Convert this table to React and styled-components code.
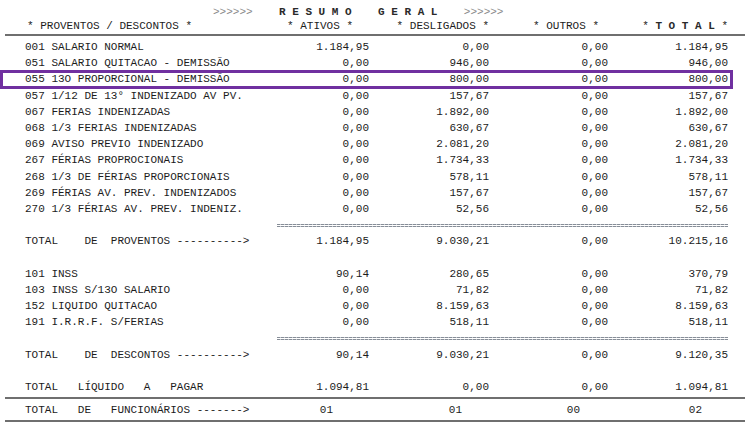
import React from 'react'
import styled, { createGlobalStyle } from 'styled-components'

const GlobalStyle = createGlobalStyle`
  html, body {
    margin: 0;
    padding: 0;
    background: #ffffff;
  }
  body {
    font-family: "Liberation Mono", "Courier New", monospace;
    font-size: 11px;
    color: #1c1c1c;
  }
`

const Sheet = styled.div`
  width: 740px;
  margin-left: 5px;
  padding-top: 5px;
`

const Title = styled.div`
  padding-left: 208px;
  line-height: 14px;
  white-space: pre;
`

const Arrows = styled.span`
  color: #8a8a8a;
`

const Spaced = styled.span`
  font-weight: bold;
  color: #2a2a2a;
`

const Rule = styled.div`
  height: 2px;
  background: #6f6f6f;
  margin-top: ${p => p.$top || 0}px;
  margin-bottom: ${p => p.$bottom || 0}px;
`

const Grid = styled.div`
  display: grid;
  grid-template-columns: 224px 120px 120px 119px 120px;
  padding-left: 20px;
  height: 16.2px;
  line-height: 16.2px;
  position: relative;

  ${p => p.$boxed && `
    &::after {
      content: '';
      position: absolute;
      left: -5px;
      right: 12px;
      top: -1px;
      bottom: -1px;
      border: 3px solid #7030a0;
      pointer-events: none;
    }
  `}
`

const HeadRow = styled(Grid)`
  height: 14px;
  line-height: 14px;
`

const Label = styled.div`
  white-space: pre;
  padding-left: ${p => p.$pl || 0}px;
`

const Num = styled.div`
  text-align: right;
  white-space: pre;
  padding-right: ${p => p.$pr || 0}px;
`

const Body = styled.div`
  padding-top: 3px;
`

const Equals = styled.div`
  grid-column: 2 / 6;
  margin-left: 28px;
  align-self: center;
  height: 3px;
  background:
    linear-gradient(#fff, #fff) 0 1px / 100% 1px no-repeat,
    repeating-linear-gradient(90deg, #868d97 0 3px, #c4c8ce 3px 4px);
`

const proventos = [
  ['001 SALARIO NORMAL', '1.184,95', '0,00', '0,00', '1.184,95'],
  ['051 SALARIO QUITACAO - DEMISSÃO', '0,00', '946,00', '0,00', '946,00'],
  ['055 13O PROPORCIONAL - DEMISSÃO', '0,00', '800,00', '0,00', '800,00', true],
  ['057 1/12 DE 13° INDENIZADO AV PV.', '0,00', '157,67', '0,00', '157,67'],
  ['067 FERIAS INDENIZADAS', '0,00', '1.892,00', '0,00', '1.892,00'],
  ['068 1/3 FERIAS INDENIZADAS', '0,00', '630,67', '0,00', '630,67'],
  ['069 AVISO PREVIO INDENIZADO', '0,00', '2.081,20', '0,00', '2.081,20'],
  ['267 FÉRIAS PROPROCIONAIS', '0,00', '1.734,33', '0,00', '1.734,33'],
  ['268 1/3 DE FÉRIAS PROPORCIONAIS', '0,00', '578,11', '0,00', '578,11'],
  ['269 FÉRIAS AV. PREV. INDENIZADOS', '0,00', '157,67', '0,00', '157,67'],
  ['270 1/3 FÉRIAS AV. PREV. INDENIZ.', '0,00', '52,56', '0,00', '52,56'],
]

const descontos = [
  ['101 INSS', '90,14', '280,65', '0,00', '370,79'],
  ['103 INSS S/13O SALARIO', '0,00', '71,82', '0,00', '71,82'],
  ['152 LIQUIDO QUITACAO', '0,00', '8.159,63', '0,00', '8.159,63'],
  ['191 I.R.R.F. S/FERIAS', '0,00', '518,11', '0,00', '518,11'],
]

const Line = ({ cells, boxed, pads = [] }) => (
  <Grid $boxed={boxed}>
    <Label>{cells[0]}</Label>
    {cells.slice(1, 5).map((v, i) => (
      <Num key={i} $pr={pads[i]}>{v}</Num>
    ))}
  </Grid>
)

const Separator = () => (
  <Grid>
    <Equals />
  </Grid>
)

const Blank = () => <Grid />

export default function App() {
  return (
    <>
      <GlobalStyle />
      <Sheet>
        <Title>
          <Arrows>{'>>>>>>'}</Arrows>
          {'    '}
          <Spaced>{'R E S U M O    G E R A L'}</Spaced>
          {'    '}
          <Arrows>{'>>>>>>'}</Arrows>
        </Title>
        <HeadRow>
          <Label $pl={2}>{'* PROVENTOS / DESCONTOS *'}</Label>
          <Num $pr={16}>{'* ATIVOS *'}</Num>
          <Num>{'* DESLIGADOS *'}</Num>
          <Num $pr={9}>{'* OUTROS *'}</Num>
          <Num>
            {'* '}
            <Spaced>{'T O T A L'}</Spaced>
            {' *'}
          </Num>
        </HeadRow>
        <Rule $top={1} />
        <Body>
          {proventos.map(r => (
            <Line key={r[0]} cells={r} boxed={r[5]} />
          ))}
          <Separator />
          <Line cells={['TOTAL    DE  PROVENTOS ---------->', '1.184,95', '9.030,21', '0,00', '10.215,16']} />
          <Blank />
          {descontos.map(r => (
            <Line key={r[0]} cells={r} />
          ))}
          <Separator />
          <Line cells={['TOTAL    DE  DESCONTOS ---------->', '90,14', '9.030,21', '0,00', '9.120,35']} />
          <Blank />
          <Line cells={['TOTAL   LÍQUIDO   A   PAGAR', '1.094,81', '0,00', '0,00', '1.094,81']} />
        </Body>
        <Rule $top={1.6} $bottom={3} />
        <Line
          cells={['TOTAL   DE   FUNCIONÁRIOS ------->', '01', '01', '00', '02']}
          pads={[36, 27, 28, 26]}
        />
        <Rule $top={2} />
      </Sheet>
    </>
  )
}
